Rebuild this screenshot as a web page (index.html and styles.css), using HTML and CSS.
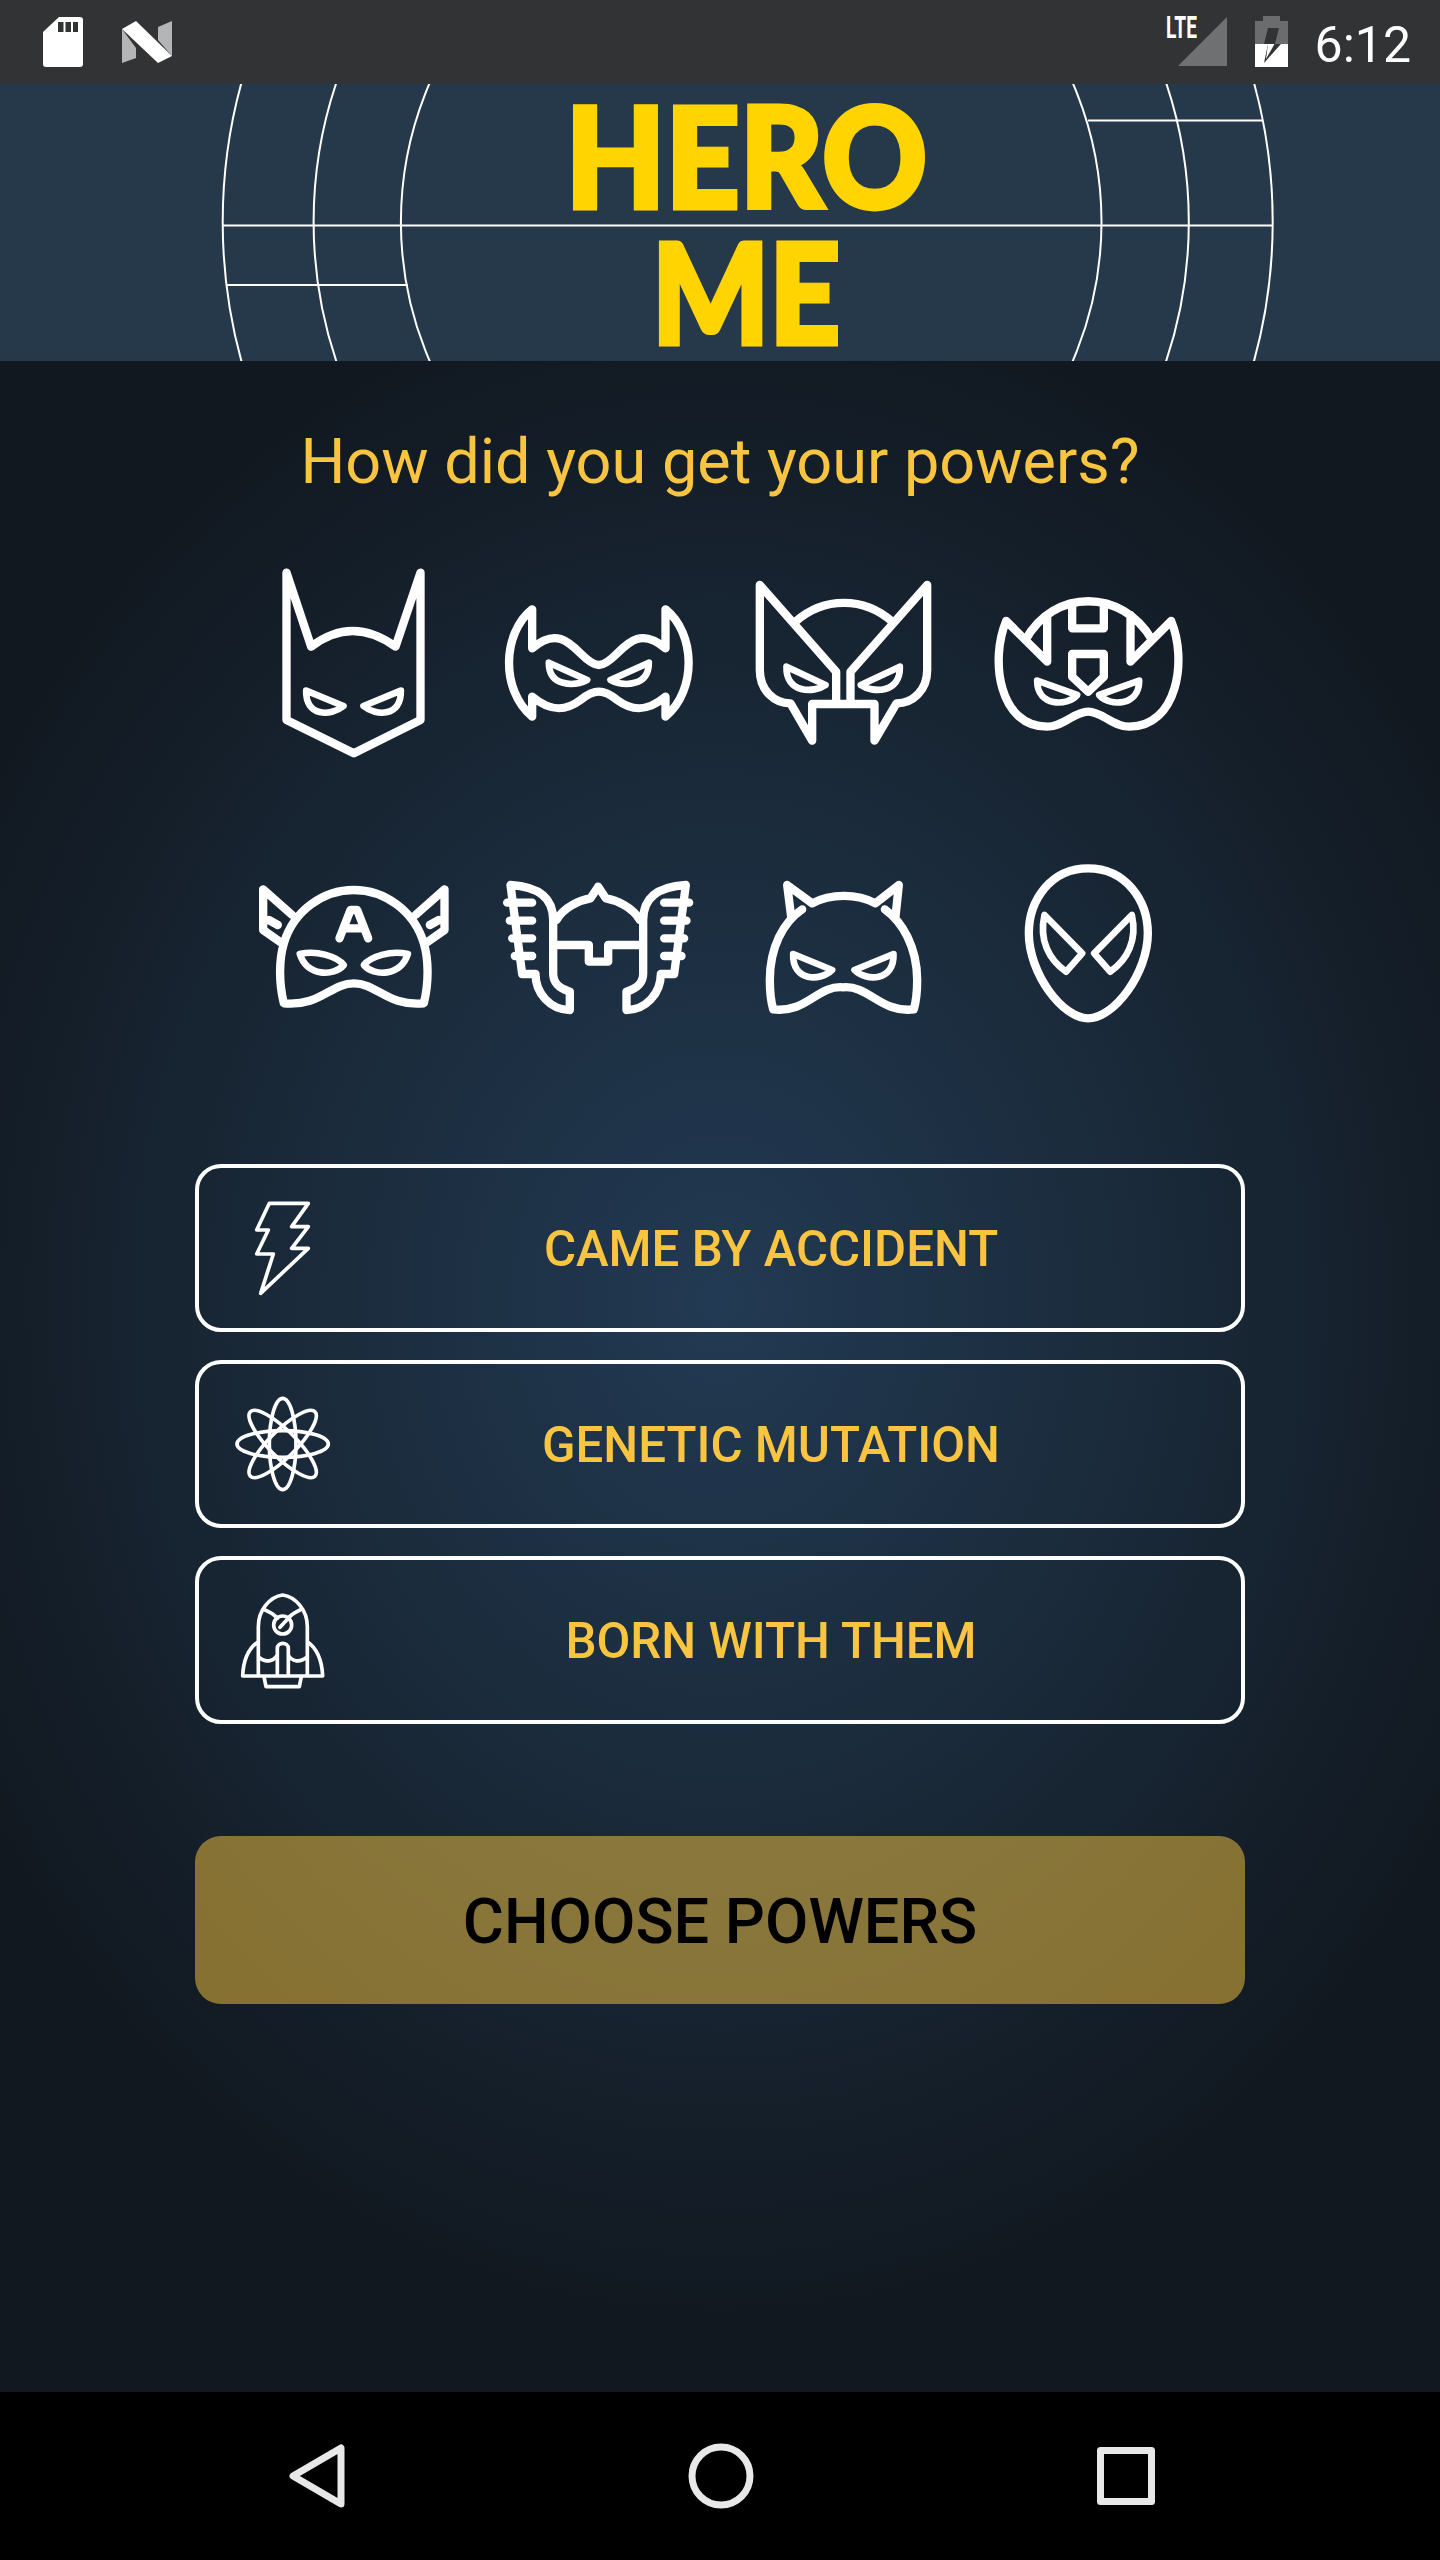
FILE: index.html
```html
<!DOCTYPE html>
<html lang="en">
<head>
<meta charset="utf-8">
<title>Hero Me</title>
<link rel="stylesheet" href="styles.css">
</head>
<body>
<div class="phone">
  <div class="status">
    <div class="status-left">
      <svg class="ic-sd" width="40" height="50" viewBox="0 0 40 50"><path fill="#fff" d="M16 0H37a3 3 0 0 1 3 3V47a3 3 0 0 1-3 3H3a3 3 0 0 1-3-3V15Z"/><path fill="#323334" d="M15 5h5.500v10H15zM22.500 5H28v10h-5.500zM30 5h5v10h-5z"/></svg>
      <svg class="ic-n" width="50" height="42" viewBox="0 0 50 42"><path fill="#b4b5b6" d="M0 8 14 27V37L0 42ZM36 6 50 0V35L36 19Z"/><path fill="#fff" d="M0 8 14 0 50 35 36 42Z"/></svg>
    </div>
    <div class="status-right">
      <span class="lte">LTE</span>
      <svg class="ic-signal" width="49" height="49" viewBox="0 0 49 49"><path fill="#6f7071" d="M49 0V49H0Z"/></svg>
      <svg class="ic-batt" width="33" height="51" viewBox="0 0 33 51"><path fill="#6b6c6d" d="M8 0H25V5H33V28H0V5H8Z"/><path fill="#fff" d="M0 28H33V51H0Z"/><path fill="#323334" d="M13 12H24L20 28H26L9 47 13 28H9Z"/><path fill="#fff" d="M13 28H19.500L11 43Z"/></svg>
      <span class="clock">6:12</span>
    </div>
  </div>

  <header class="hero">
    <svg class="hero-lines" width="1440" height="277" viewBox="0 84 1440 277" fill="none" stroke="#fff" stroke-width="2">
      <circle cx="747.700" cy="222" r="525"/>
      <circle cx="751.200" cy="222" r="437.600"/>
      <circle cx="751.200" cy="222" r="350.300"/>
      <path d="M223 225.500H1273M227 285H408M1088 120.500H1263"/>
    </svg>
    <h1 class="logo"><span class="logo-line">HERO</span><span class="logo-line logo-short">ME</span></h1>
  </header>

  <main class="content">
    <h2 class="question">How did you get your powers?</h2>

    <div class="masks">
      <svg class="mask" viewBox="37.500 36 600 600"><path d="M138 68 212 290Q335 196 465 290L540 68V510L340 610 138 510Z"/><path class="eye" d="M197 422 309 468C270 500 195 500 197 422ZM481 422 369 468C408 500 483 500 481 422Z"/></svg>
      <svg class="mask" viewBox="772.500 36 600 600"><path d="M875 178V295C945 235 985 275 1020 310 1045 335 1060 345 1075 345 1090 345 1105 335 1130 310 1165 275 1205 235 1275 295V178C1365 250 1370 420 1275 500V440C1215 490 1170 480 1130 450 1105 430 1090 425 1075 425 1060 425 1045 430 1020 450 980 480 935 490 875 440V500C780 420 785 250 875 178Z"/><path class="eye" d="M925 338 1040 390C1000 410 925 410 925 338ZM1225 338 1110 390C1150 410 1225 410 1225 338Z"/></svg>
      <svg class="mask" viewBox="67.500 36 600 600"><path d="M347 460V365L118 105V360C118 420 160 460 210 460L275 572V462H462V572L528 460C578 460 620 420 620 360V105L390 365V460M225 215C310 140 430 140 515 215"/><path class="eye" d="M198 350 315 405C280 430 195 430 198 350ZM538 350 421 405C456 430 541 430 538 350Z"/></svg>
      <svg class="mask" viewBox="802.500 36 600 600"><path d="M857 213 980 335V195M1352 213 1230 335V195M915 270C1000 115 1205 115 1295 270M1055 165V235H1150V165M1055 312H1150V380L1103 425 1055 380ZM857 213C808 330 835 530 980 530 1030 530 1060 485 1103 485 1146 485 1176 530 1226 530 1371 530 1401 330 1352 213"/><path class="eye" d="M950 392 1070 435C1040 470 950 470 950 392ZM1256 392 1136 435C1166 470 1256 470 1256 392Z"/></svg>
      <svg class="mask" viewBox="37.500 -24 600 600"><path d="M130 460C115 400 115 330 130 280 160 180 250 120 340 120 430 120 520 180 550 280 565 330 565 400 550 460 440 470 410 400 340 400 270 400 240 470 130 460ZM155 195 68 118V240L125 280M525 195 612 118V240L555 280M85 210 112 225M595 210 568 225"/><path d="M297 265 330 180H350L383 265M310 235H370"/><path class="eye" d="M178 312C230 300 290 320 310 345 280 380 200 380 178 312ZM502 312C450 300 390 320 370 345 400 380 480 380 502 312Z"/></svg>
      <svg class="mask" viewBox="772.500 -24 600 600"><path d="M810 105C890 110 938 140 938 210V370C938 400 955 415 988 425V480C930 480 885 430 885 372H845ZM1336 105C1256 110 1208 140 1208 210V370C1208 400 1191 415 1158 425V480C1216 480 1261 430 1261 372H1301ZM938 285H1045V335H1103V285H1208M948 210C970 170 1020 150 1050 145L1073 110 1096 145C1126 150 1176 170 1198 210M800 158H875M808 212H875M815 265H875M823 318H875M1346 158H1271M1338 212H1271M1331 265H1271M1323 318H1271"/></svg>
      <svg class="mask" viewBox="67.500 -24 600 600"><path d="M212 200 200 105 275 160C330 130 410 130 465 160L535 105 525 200M245 178C190 215 148 290 148 390 148 420 150 450 158 478 260 490 290 405 368 412 445 405 480 490 580 478 588 450 590 420 590 390 590 290 545 215 493 178"/><path class="eye" d="M218 312 335 360C300 395 215 395 218 312ZM519 312 402 360C437 395 522 395 519 312Z"/></svg>
      <svg class="mask" viewBox="802.500 -24 600 600"><path d="M1103 55C1215 55 1282 150 1282 250 1282 370 1180 505 1103 505 1026 505 925 370 925 250 925 150 991 55 1103 55Z"/><path class="eye" d="M972 195 1085 310 1037 365C985 330 955 270 972 195ZM1234 195 1121 310 1169 365C1221 330 1251 270 1234 195Z"/></svg>
    </div>

    <div class="options">
      <button class="option" type="button">
        <span class="option-icon"><svg class="glyph" viewBox="99 114 360 360"><path d="M238 160H355L305 230H355L305 295H355L212 430 250 312H200L235 240H200Z"/></svg></span>
        <span class="option-label">CAME BY ACCIDENT</span>
      </button>
      <button class="option" type="button">
        <span class="option-icon"><svg class="glyph" viewBox="99 133 360 360"><ellipse cx="278" cy="313" rx="137" ry="40"/><ellipse cx="278" cy="313" rx="137" ry="40" transform="rotate(45 278 313)"/><ellipse cx="278" cy="313" rx="137" ry="40" transform="rotate(90 278 313)"/><ellipse cx="278" cy="313" rx="137" ry="40" transform="rotate(135 278 313)"/></svg></span>
        <span class="option-label">GENETIC MUTATION</span>
      </button>
      <button class="option" type="button">
        <span class="option-icon"><svg class="glyph" viewBox="99 720 360 360"><path d="M205 1008V860C205 810 240 770 278 765 316 770 352 810 352 860V1008M225 810C245 818 255 826 262 835M330 810C312 818 302 826 294 835M270 862 295 835M205 905C175 925 160 960 158 1008H398C396 960 381 925 352 905M222 1010 228 1040H328L334 1010M262 1005V925C262 905 295 905 295 925V1005M205 950C225 970 250 965 262 945M295 945C305 965 330 970 352 950"/><circle cx="278" cy="855" r="27"/></svg></span>
        <span class="option-label">BORN WITH THEM</span>
      </button>
    </div>

    <button class="choose" type="button">CHOOSE POWERS</button>
  </main>

  <nav class="navbar">
    <svg width="56" height="66" viewBox="0 0 56 66" fill="none" stroke="#e8e8e8" stroke-width="7" stroke-linejoin="round"><path d="M52 5V61L4 33Z"/></svg>
    <svg width="66" height="66" viewBox="0 0 66 66" fill="none" stroke="#e8e8e8" stroke-width="7"><circle cx="33" cy="33" r="29"/></svg>
    <svg width="58" height="58" viewBox="0 0 58 58" fill="none" stroke="#e8e8e8" stroke-width="7" stroke-linejoin="round"><rect x="3.500" y="3.500" width="51" height="51"/></svg>
  </nav>
</div>
</body>
</html>
```

FILE: styles.css
```css
* { box-sizing: border-box; }
html, body { margin: 0; padding: 0; background: #000; }
.phone {
  width: 1440px;
  height: 2560px;
  display: flex;
  flex-direction: column;
  font-family: Roboto, "Liberation Sans", sans-serif;
  overflow: hidden;
}
.status {
  height: 84px;
  flex: none;
  background: #323334;
  display: flex;
  justify-content: space-between;
  color: #fff;
}
.status-left { display: flex; gap: 39px; padding: 17px 0 0 43px; align-items: flex-start; }
.ic-n { margin-top: 4px; }
.status-right { display: flex; align-items: flex-start; padding: 16px 29px 0 0; position: relative; }
.lte {
  position: absolute;
  right: 243px;
  top: 10px;
  font-size: 31px;
  line-height: 36px;
  font-weight: 700;
  transform: scaleX(.62);
  transform-origin: right center;
}
.ic-signal { margin: 1px 28px 0 0; }
.ic-batt { margin-right: 27px; }
.clock { font-size: 50px; line-height: 58px; }

.hero {
  position: relative;
  height: 277px;
  flex: none;
  background: #26394b;
  overflow: hidden;
}
.hero-lines { position: absolute; left: 0; top: 0; }
.logo {
  position: relative;
  margin: 0;
  padding: 3px 0 0 52px;
  display: flex;
  flex-direction: column;
  align-items: center;
  color: #ffd400;
  font-family: Lato, "Liberation Sans", sans-serif;
  font-weight: 900;
  font-size: 139px;
  line-height: 136px;
  letter-spacing: 0;
  -webkit-text-stroke: 5px #ffd400;
}
.logo-line { display: block; height: 136px; transform: scaleX(.93); }
.logo-short { transform: scaleX(.89); }

.content {
  flex: 1;
  display: flex;
  flex-direction: column;
  align-items: center;
  padding-top: 61px;
  background: radial-gradient(ellipse 850px 1020px at 720px 940px, #223a53 0%, #1a2a3a 50%, #111820 100%);
}
.question {
  margin: 0;
  height: 80px;
  font-size: 63px;
  line-height: 80px;
  font-weight: 400;
  color: #f9c540;
}
.masks {
  margin-top: 60px;
  display: grid;
  grid-template-columns: repeat(4, 200px);
  column-gap: 45px;
  row-gap: 80px;
}
.mask {
  display: block;
  width: 200px;
  height: 200px;
  fill: none;
  stroke: #fff;
  stroke-width: 25;
  stroke-linejoin: round;
  stroke-linecap: round;
}
.eye { stroke-width: 20; }
.options {
  margin-top: 122px;
  display: flex;
  flex-direction: column;
  gap: 28px;
  width: 1050px;
}
.option {
  height: 168px;
  padding: 2px 0 0;
  border: 4px solid #fff;
  border-radius: 26px;
  background: transparent;
  display: flex;
  align-items: center;
  font-family: inherit;
}
.option-icon {
  width: 168px;
  flex: none;
  display: flex;
  justify-content: center;
  margin-top: -2px;
}
.glyph {
  display: block;
  width: 120px;
  height: 120px;
  fill: none;
  stroke: #fff;
  stroke-width: 11;
  stroke-linejoin: round;
  stroke-linecap: round;
}
.option-label {
  flex: 1;
  padding-right: 66px;
  text-align: center;
  font-size: 49.200px;
  font-weight: 500;
  color: #f9c540;
}
.choose {
  margin-top: 112px;
  width: 1050px;
  height: 168px;
  padding: 2px 0 0;
  border: 0;
  border-radius: 26px;
  background: rgba(249, 197, 64, .5);
  color: #000;
  font-family: inherit;
  font-size: 63px;
  font-weight: 500;
}
.navbar {
  height: 168px;
  flex: none;
  background: #000;
  display: grid;
  grid-template-columns: 289px 56px 343px 66px 343px 58px 285px;
  align-items: center;
}
.navbar svg:nth-child(1) { grid-column: 2; }
.navbar svg:nth-child(2) { grid-column: 4; }
.navbar svg:nth-child(3) { grid-column: 6; }
```
